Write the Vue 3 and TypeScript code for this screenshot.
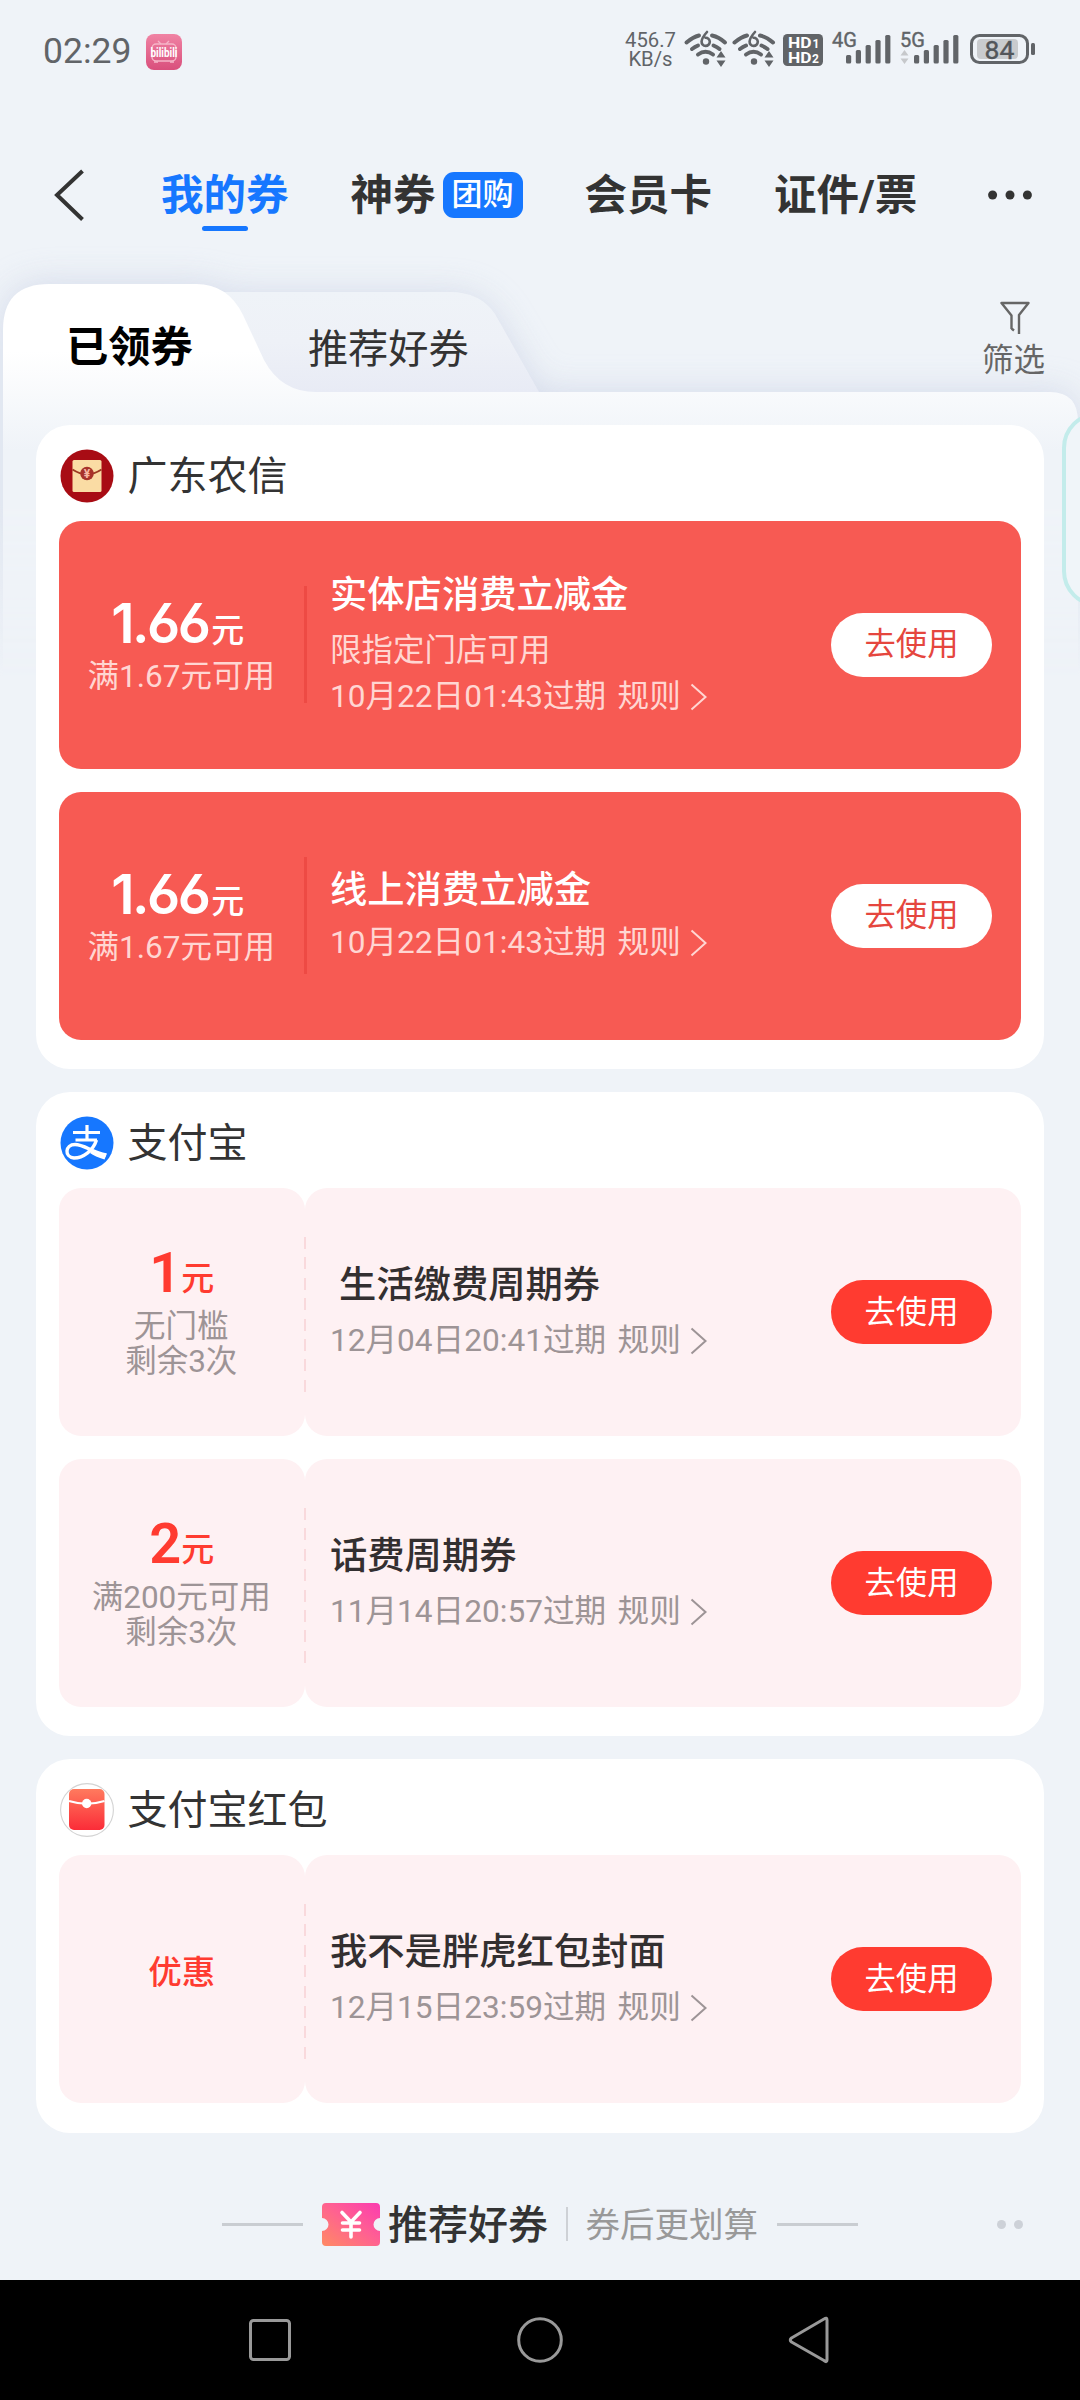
<script setup lang="ts">
interface Coupon {
  value: string
  unit?: string
  conds: string[]
  title: string
  desc?: string
  expire: string
  indent?: boolean
}
interface Group {
  icon: 'bank' | 'alipay' | 'packet'
  name: string
  solid: boolean
  coupons: Coupon[]
}

const groups: Group[] = [
  {
    icon: 'bank',
    name: '广东农信',
    solid: true,
    coupons: [
      { value: '1.66', unit: '元', conds: ['满1.67元可用'], title: '实体店消费立减金', desc: '限指定门店可用', expire: '10月22日01:43过期' },
      { value: '1.66', unit: '元', conds: ['满1.67元可用'], title: '线上消费立减金', expire: '10月22日01:43过期' },
    ],
  },
  {
    icon: 'alipay',
    name: '支付宝',
    solid: false,
    coupons: [
      { value: '1', unit: '元', conds: ['无门槛', '剩余3次'], title: '生活缴费周期券', expire: '12月04日20:41过期', indent: true },
      { value: '2', unit: '元', conds: ['满200元可用', '剩余3次'], title: '话费周期券', expire: '11月14日20:57过期' },
    ],
  },
  {
    icon: 'packet',
    name: '支付宝红包',
    solid: false,
    coupons: [
      { value: '优惠', conds: [], title: '我不是胖虎红包封面', expire: '12月15日23:59过期' },
    ],
  },
]
const bars = [0, 1, 2, 3, 4]
</script>

<template>
  <div class="screen">
    <header class="status">
      <span class="time">02:29</span>
      <svg class="bili" viewBox="0 0 36 36">
        <defs>
          <linearGradient id="gb" x1="0" y1="0" x2="0" y2="1">
            <stop offset="0" stop-color="#f083a4" /><stop offset="1" stop-color="#d94f7c" />
          </linearGradient>
        </defs>
        <rect width="36" height="36" rx="8" fill="url(#gb)" />
        <rect x="6" y="10" width="24" height="17" rx="4" fill="none" stroke="#f5b5c8" stroke-width="1.4" />
        <path d="M12 7l3 3M23 7l-3 3M8 28h4M24 28h4" stroke="#f5b5c8" stroke-width="1.3" />
        <text x="18" y="23" text-anchor="middle" textLength="27" lengthAdjust="spacingAndGlyphs" font-size="13" font-weight="700" fill="#fff">bilibili</text>
      </svg>
      <div class="sys">
        <div class="speed"><span>456.7</span><span>KB/s</span></div>
        <svg v-for="n in 2" :key="n" class="wifi" viewBox="0 0 44 38">
          <g fill="none" stroke="#616468" stroke-width="4" stroke-linecap="round">
            <path d="M2.500 12.500Q9 7 15 5.500M28 5.500Q35 7 41 12.500" />
            <path d="M8 19Q11 16.800 14 15.500M29.500 15.500Q33 17 35.500 19" />
            <path d="M14 24.500Q21.500 19 29 24.500" />
            <path d="M23 2Q18 7.500 17.600 11.500A4.100 4.100 0 1 0 21.500 7.700" stroke-width="2.600" />
          </g>
          <circle cx="22" cy="31.500" r="3.200" fill="#616468" />
          <path d="M37 21l4.500 6.500h-9zM37 37l4.500-6.500h-9z" fill="#616468" />
        </svg>
        <svg class="hd" viewBox="0 0 40 32">
          <rect width="40" height="32" rx="4.500" fill="#616468" />
          <g fill="#fff" font-weight="700" font-size="15.500">
            <text x="5" y="14.300" textLength="23.500" lengthAdjust="spacingAndGlyphs">HD</text>
            <text x="5" y="28.700" textLength="23.500" lengthAdjust="spacingAndGlyphs">HD</text>
            <text x="29.500" y="14.300" font-size="12">1</text>
            <text x="29" y="28.700" font-size="12">2</text>
          </g>
        </svg>
        <svg v-for="g in ['4G', '5G']" :key="g" class="signal" :class="{ five: g === '5G' }" viewBox="0 0 60 34">
          <text x="0" y="14.500" font-size="20" fill="#616468" stroke="#616468" stroke-width=".4">{{ g }}</text>
          <rect v-for="b in bars" :key="b" :x="14 + b * 9.800" :y="23 - b * 5" width="5.200" :height="8.500 + b * 5" rx="1.500" fill="#616468" />
          <path v-if="g === '5G'" d="M4.500 18l4 5.500h-8zM4.500 32l4-5.500h-8z" fill="#c6c8cb" />
        </svg>
        <svg class="battery" viewBox="0 0 66 30">
          <rect x="1.500" y="1.500" width="56" height="27" rx="8" fill="none" stroke="#616468" stroke-width="3" />
          <rect x="7" y="5" width="41" height="20" rx="4" fill="#c9cbce" />
          <rect x="61" y="9" width="4" height="12" rx="1.500" fill="#616468" />
          <text x="29.500" y="24.500" text-anchor="middle" font-size="26.500" fill="#53565a" stroke="#53565a" stroke-width=".4">84</text>
        </svg>
      </div>
    </header>

    <nav class="nav">
      <svg class="back" viewBox="0 0 32 54"><path d="M29.500 3L4 27l25.500 24.500" fill="none" stroke="#333" stroke-width="4" /></svg>
      <span class="tab active">我的券</span>
      <span class="tab shen">神券</span>
      <span class="badge">团购</span>
      <span class="tab member">会员卡</span>
      <span class="tab cert">证件/票</span>
      <svg class="more" viewBox="0 0 44 10"><circle cx="4.600" cy="5" r="4.500" /><circle cx="22" cy="5" r="4.500" /><circle cx="39.400" cy="5" r="4.500" /></svg>
    </nav>

    <section class="folders">
      <svg class="folder-bg" viewBox="0 0 1080 440">
        <defs>
          <linearGradient id="gw" gradientUnits="userSpaceOnUse" x1="0" y1="44" x2="0" y2="440">
            <stop offset="0" stop-color="#fff" /><stop offset=".17" stop-color="#fff" />
            <stop offset=".42" stop-color="#eff3f8" /><stop offset="1" stop-color="#eff3f8" />
          </linearGradient>
          <linearGradient id="g2" x1="0" y1="0" x2="0" y2="1">
            <stop offset="0" stop-color="#eff3f8" /><stop offset=".5" stop-color="#eef1f7" /><stop offset="1" stop-color="#e8ebf5" />
          </linearGradient>
          <linearGradient id="gm" x1="0" y1="0" x2="0" y2="1">
            <stop offset=".6" stop-color="#fff" /><stop offset="1" stop-color="#000" />
          </linearGradient>
          <mask id="fade"><rect width="1080" height="440" fill="url(#gm)" /></mask>
          <filter id="soft" x="-20%" y="-20%" width="140%" height="140%"><feGaussianBlur stdDeviation="17" /></filter>
        </defs>
        <g mask="url(#fade)">
          <g filter="url(#soft)" fill="#cfd6e7" opacity=".85">
            <path d="M220 54H450Q480 54 495 78L539 152H220z" />
            <path d="M3 440V90Q3 44 49 44H196Q228 44 243 75L264 120Q281 152 316 152H1050Q1078 152 1078 182V440z" />
          </g>
          <path d="M220 52H450Q480 52 495 74L539 152H220z" fill="url(#g2)" />
          <path d="M3 440V90Q3 44 49 44H196Q228 44 243 75L264 120Q281 152 316 152H1050Q1078 152 1078 182V440z" fill="url(#gw)" />
        </g>
      </svg>
      <span class="own">已领券</span>
      <span class="rec">推荐好券</span>
      <div class="filter">
        <svg viewBox="0 0 30 34"><path d="M11.500 27.500L14 29.500M11.500 28V14.500L1.500 2H28.500L19 14V33" fill="none" stroke="#666" stroke-width="2.400" stroke-linejoin="round" /></svg>
        <span>筛选</span>
      </div>
    </section>

    <main class="cards">
      <section v-for="g in groups" :key="g.name" class="card">
        <div class="head">
          <svg v-if="g.icon === 'bank'" viewBox="0 0 54 54">
            <circle cx="27" cy="27" r="26.500" fill="#a80c14" />
            <rect x="12.500" y="11" width="29" height="32" rx="1.500" fill="#fadca4" />
            <path d="M12.500 20.500Q27 30 41.500 20.500" fill="none" stroke="#9c3b22" stroke-width="1.800" />
            <circle cx="27" cy="24.500" r="6.800" fill="#a8322a" />
            <text x="27" y="29" font-size="12" text-anchor="middle" font-weight="700" fill="#f7b8a2">¥</text>
          </svg>
          <svg v-else-if="g.icon === 'alipay'" viewBox="0 0 54 54">
            <circle cx="27" cy="27" r="26.500" fill="#1677ff" />
            <g fill="none" stroke="#fff">
              <path d="M13 16.500H40M27 9V24M15.500 24H37" stroke-width="3.200" />
              <path d="M36.500 24C33 35 23 42 14 42C4 41 5 28.500 15 28.500C24 28.500 32 36 46 39" stroke-width="3.400" />
            </g>
            <path d="M32 34.500Q38 37 47 37.500L44.500 43.500Q35 40.500 30 37z" fill="#fff" />
          </svg>
          <svg v-else viewBox="0 0 54 54">
            <defs><linearGradient id="gp" x1="0" y1="0" x2="0" y2="1"><stop offset="0" stop-color="#ff7a5e" /><stop offset="1" stop-color="#fb2c38" /></linearGradient></defs>
            <circle cx="27" cy="27" r="26.400" fill="#fff" stroke="#d3d3d3" stroke-width="1.100" />
            <rect x="9" y="6" width="35.500" height="41" rx="5" fill="url(#gp)" />
            <path d="M9 18Q26.700 23.500 44.500 18" fill="none" stroke="#fff" stroke-width="2.200" />
            <circle cx="26.700" cy="20.500" r="4.700" fill="#fff" />
          </svg>
          <span>{{ g.name }}</span>
        </div>
        <div v-for="c in g.coupons" :key="c.title" class="coupon" :class="{ solid: g.solid }">
          <div class="left">
            <div class="value" :class="{ word: !c.unit }">{{ c.value }}<i v-if="c.unit">{{ c.unit }}</i></div>
            <div v-if="c.conds.length" class="conds"><div v-for="t in c.conds" :key="t">{{ t }}</div></div>
          </div>
          <div class="split" />
          <div class="right">
            <div class="info">
              <div class="title" :class="{ indent: c.indent }">{{ c.title }}</div>
              <div v-if="c.desc" class="desc">{{ c.desc }}</div>
              <div class="expire">
                <span>{{ c.expire }}</span><span class="rule">规则</span>
                <svg viewBox="0 0 17 28"><path d="M1.500 1.500L15.500 14L1.500 26.500" fill="none" stroke="currentColor" stroke-width="2" /></svg>
              </div>
            </div>
            <button>去使用</button>
          </div>
        </div>
      </section>
    </main>

    <section class="more-coupons">
      <i class="line" />
      <svg class="ticket" viewBox="0 0 58 43">
        <defs><linearGradient id="gt" x1="0" y1="1" x2="1" y2="0"><stop offset="0" stop-color="#ff8a63" /><stop offset=".55" stop-color="#ff5f93" /><stop offset="1" stop-color="#fb3bb0" /></linearGradient></defs>
        <path d="M4 0H54Q58 0 58 4V15A6.500 6.500 0 0 0 58 28V39Q58 43 54 43H4Q0 43 0 39V28A6.500 6.500 0 0 0 0 15V4Q0 0 4 0z" fill="url(#gt)" />
        <path d="M20 9.500L29 19L38 9.500M29 19V34M20.500 20H37.500M20.500 27H37.500" fill="none" stroke="#fff" stroke-width="3.600" stroke-linecap="round" />
      </svg>
      <b>推荐好券</b>
      <i class="bar" />
      <span>券后更划算</span>
      <i class="line end" />
      <i class="dot" /><i class="dot" />
    </section>

    <footer class="sysnav">
      <svg viewBox="0 0 46 46"><rect x="3.500" y="3.500" width="39" height="39" rx="3" /></svg>
      <svg viewBox="0 0 46 46"><circle cx="23" cy="23" r="21.300" /></svg>
      <svg viewBox="0 0 46 46"><path d="M40 3V43Q40 46 37 43.500L4.500 25Q2 23 4.500 21L37 2Q40 0 40 3z" stroke-linejoin="round" /></svg>
    </footer>
    <div class="floater" />
  </div>
</template>

<style>
body { margin: 0; }
</style>

<style scoped>
.screen {
  position: relative;
  width: 1080px;
  height: 2400px;
  overflow: hidden;
  display: flex;
  flex-direction: column;
  background: #eff3f8;
  color: #333;
  font-family: Roboto, "Noto Sans CJK SC", sans-serif;
}
svg { display: block; flex: none; overflow: visible; }
span, b { white-space: nowrap; }
i { font-style: normal; }

.status { display: flex; height: 104px; box-sizing: border-box; padding: 0 44.500px 0 43px; color: #616468; flex: none; }
.time { width: 103px; font-size: 35.500px; line-height: 42px; margin-top: 30px; }
.bili { width: 36px; height: 36px; margin-top: 34px; }
.sys { margin-left: auto; display: flex; }
.speed { display: flex; flex-direction: column; align-items: center; width: 54px; font-size: 20.300px; line-height: 19px; margin: 31px 6px 0 0; }
.wifi { width: 44px; height: 38px; margin: 30px 4px 0 0; }
.hd { width: 40px; height: 32px; margin: 34px 9px 0 3px; }
.signal { width: 60px; height: 34px; margin-top: 32px; }
.five { margin-left: 8px; }
.battery { width: 66px; height: 30px; margin: 34px 0 0 10px; }

.nav { display: flex; align-items: center; height: 136px; padding: 0 48px 0 53px; box-sizing: border-box; position: relative; flex: none; }
.nav > * { margin-bottom: -46px; margin-top: 0; position: relative; }
.back { width: 32px; height: 54px; }
.tab { font-size: 42.500px; line-height: 60px; font-weight: 700; padding-top: 2px; }
.active { color: #1677ff; margin-left: 76px; }
.active::after { content: ""; position: absolute; left: 41px; bottom: -5px; width: 46px; height: 5px; border-radius: 3px; background: #1677ff; }
.shen { margin-left: 62px; }
.badge { margin-left: 7px; width: 80px; height: 46px; border-radius: 11px; background: #1677ff; color: #fff; font-size: 31px; line-height: 45px; text-align: center; font-weight: 500; }
.member { margin-left: 62px; }
.cert { margin-left: 62px; }
.more { width: 44px; height: 10px; margin-left: auto; }
.more circle { fill: #333; }

.folders { position: relative; display: flex; height: 185px; flex: none; }
.folder-bg { position: absolute; left: 0; top: 0; width: 1080px; height: 440px; }
.folders > span, .filter { position: relative; }
.own { margin: 78px 0 0 66px; font-size: 42.300px; line-height: 60px; font-weight: 700; color: #000; height: 60px; }
.rec { margin: 80px 0 0 115px; font-size: 40.200px; line-height: 60px; height: 60px; }
.filter { margin: 61px 35px 0 auto; display: flex; flex-direction: column; align-items: center; color: #666; font-size: 31.500px; line-height: 40px; }
.filter svg { width: 30px; height: 34px; margin: 0 0 6px 3px; }

.cards { position: relative; display: flex; flex-direction: column; gap: 23px; padding: 0 36px; }
.card { background: #fff; border-radius: 34px; padding: 0 23px 29.500px; }
.head { display: flex; align-items: center; height: 96px; font-size: 40px; padding-top: 6px; box-sizing: border-box; }
.head svg { width: 54px; height: 54px; margin-left: .5px; }
.head span { margin: -7px 0 0 14px; }
.coupon { position: relative; display: flex; height: 247.700px; }
.coupon + .coupon { margin-top: 23.300px; }
.left { width: 245.500px; display: flex; flex-direction: column; align-items: center; justify-content: center; border-radius: 22px; background: #fef1f3; }
.right { flex: 1; margin-left: .5px; display: flex; align-items: center; justify-content: space-between; padding: 0 29px 0 25px; border-radius: 22px; background: #fef1f3; }
.split { position: absolute; left: 244.500px; top: 49px; width: 2px; height: 155px; background: repeating-linear-gradient(#f9d9dc 0 12px, transparent 12px 20.400px); }
.value { color: #ff3b30; font-size: 56px; line-height: 56px; height: 56px; font-weight: 600; letter-spacing: -1px; }
.value i { position: relative; top: -2px; font-size: 33px; font-weight: 500; margin-left: 1px; letter-spacing: 0; }
.value.word { font-size: 33.500px; font-weight: 500; margin-bottom: 12px; letter-spacing: 0; }
.conds { margin: 8px 0 0 -1px; font-size: 31.500px; line-height: 35px; color: #9d9496; text-align: center; }
.title { font-size: 37.300px; line-height: 40px; font-weight: 500; color: #332f30; }
.indent { padding-left: 9px; }
.desc { font-size: 31.500px; line-height: 36px; margin-top: 18px; }
.expire { display: flex; align-items: center; font-size: 31.600px; line-height: 36px; margin-top: 18px; color: #9d9496; }
.desc + .expire { margin-top: 10px; }
.rule { margin-left: 11.500px; }
.expire svg { width: 17px; height: 28px; margin-left: 9px; }
button { width: 161px; height: 63.500px; padding: 0; border: 0; border-radius: 32px; background: #ff3b30; color: #fff; font: 400 31.300px/63px Roboto, "Noto Sans CJK SC", sans-serif; }

.solid { border-radius: 22px; background: #f75a53; }
.solid .left, .solid .right { background: none; }
.solid .split { left: 244.500px; width: 3px; top: 65px; height: 117px; background: #ee4a44; }
.solid .value { color: #fff; font-family: Inter, "Noto Sans CJK SC", sans-serif; font-size: 55px; font-feature-settings: "cv03"; letter-spacing: -2.500px; margin-left: -8px; }
.solid .value i { top: -1px; letter-spacing: 0; margin-left: 3px; }
.solid .title { color: #fff; }
.solid .title + .expire { margin-top: 15px; }
.solid .conds, .solid .desc, .solid .expire { color: #ffd6d2; }
.solid button { background: #fff; color: #e5463e; }

.more-coupons { display: flex; align-items: center; height: 147px; padding: 36px 57px 0 222px; box-sizing: border-box; flex: none; }
.line { width: 81px; height: 3px; background: #c9cdd2; }
.ticket { width: 58px; height: 43px; margin: 0 8px 0 19px; }
.more-coupons b { font-size: 40px; font-weight: 500; margin-top: -4px; }
.bar { width: 1.500px; height: 34px; background: #ced1d6; margin: 0 18px; }
.more-coupons span { font-size: 34.500px; color: #999; margin-top: -4px; }
.end { margin: 0 auto 0 19px; }
.dot { width: 9px; height: 9px; border-radius: 50%; background: #cdd1d8; margin-left: 8px; }

.sysnav { height: 121px; background: #000; display: flex; align-items: center; justify-content: space-between; padding: 0 247px; flex: none; }
.sysnav svg { width: 46px; height: 46px; }
.sysnav svg * { fill: none; stroke: #999; stroke-width: 3; }
.floater { position: absolute; left: 1062px; top: 412px; width: 80px; height: 195px; box-sizing: border-box; border: 4px solid #c3eceb; border-radius: 36px; background: #f0f5f9; }
</style>
